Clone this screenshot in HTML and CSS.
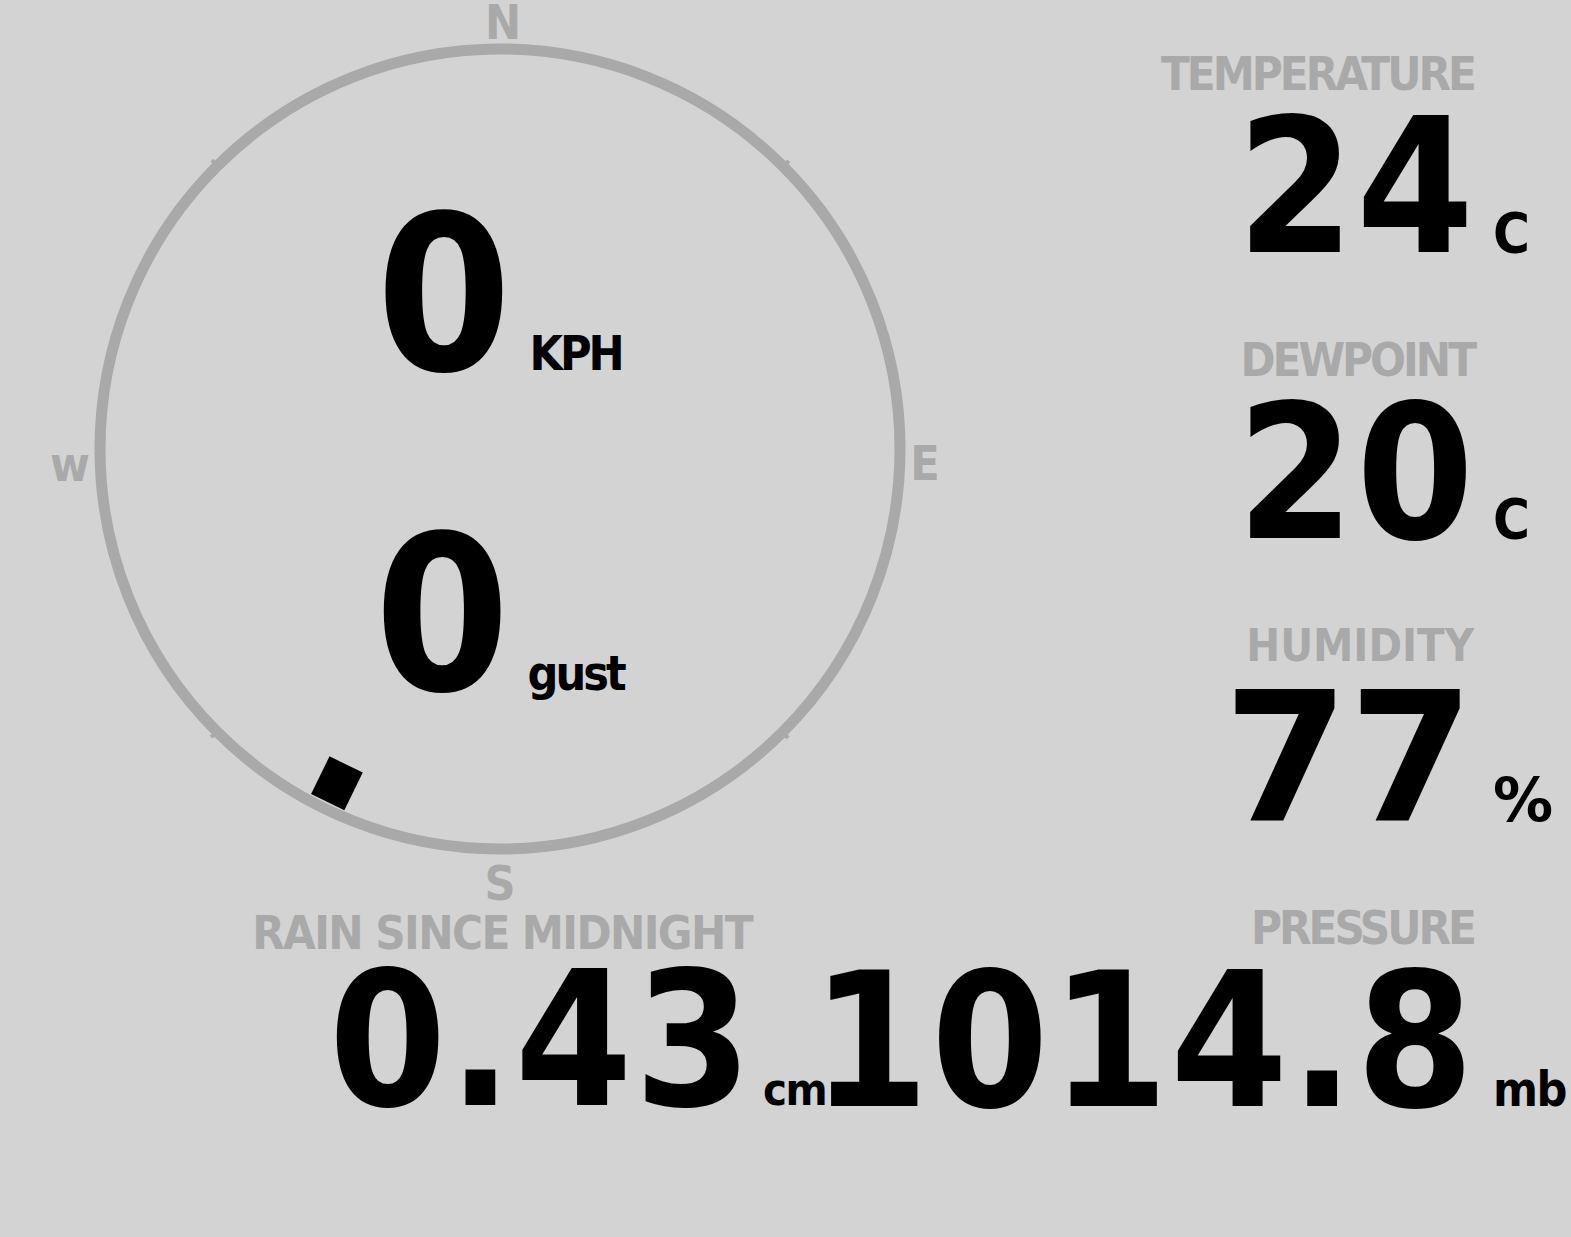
FILE: index.html
```html
<!DOCTYPE html>
<html>
<head>
<meta charset="utf-8">
<title>Weather station</title>
<link rel="stylesheet" href="styles.css">
</head>
<body>
<main class="station">
  <section class="top">
    <div class="compass">
      <svg class="dial" width="1000" height="904" viewBox="0 0 1000 904">
        <circle class="ring" cx="500" cy="449" r="400"/>
        <g transform="translate(500 449)">
          <rect class="tick" x="-1.5" y="-408" width="4" height="6" transform="rotate(45)"/>
          <rect class="tick" x="-1.5" y="-408" width="4" height="6" transform="rotate(135)"/>
          <rect class="tick" x="-1.5" y="-408" width="4" height="6" transform="rotate(225)"/>
          <rect class="tick" x="-1.5" y="-408" width="4" height="6" transform="rotate(315)"/>
          <rect class="vane" x="-18.5" y="-393" width="37" height="42" transform="rotate(206)"/>
        </g>
        <text class="cardinal" x="503" y="39">N</text>
        <text class="cardinal" x="925" y="480">E</text>
        <text class="cardinal" x="500" y="900">S</text>
        <text class="cardinal" x="70" y="481">w</text>
      </svg>
      <div class="wind">
        <div class="wind-row"><span class="wind-value">0</span><span class="wind-unit">KPH</span></div>
        <div class="wind-row"><span class="wind-value">0</span><span class="wind-unit">gust</span></div>
      </div>
    </div>
    <div class="stats">
      <div class="stat">
        <div class="label">TEMPERATURE</div>
        <div class="value">24</div>
        <div class="unit unit-c">C</div>
      </div>
      <div class="stat">
        <div class="label">DEWPOINT</div>
        <div class="value">20</div>
        <div class="unit unit-c">C</div>
      </div>
      <div class="stat stat-humidity">
        <div class="label">HUMIDITY</div>
        <div class="value">77</div>
        <div class="unit unit-pct">%</div>
      </div>
    </div>
  </section>
  <section class="bottom">
    <div class="stat stat-rain">
      <div class="label">RAIN SINCE MIDNIGHT</div>
      <div class="value">0.43</div>
      <div class="unit">cm</div>
    </div>
    <div class="stat stat-pressure">
      <div class="label">PRESSURE</div>
      <div class="value">1014.8</div>
      <div class="unit">mb</div>
    </div>
  </section>
</main>
</body>
</html>
```
FILE: styles.css
```css
html, body {
  margin: 0;
  padding: 0;
}

body {
  background: #d3d3d3;
  width: 1571px;
  height: 1237px;
  overflow: hidden;
  font-family: "DejaVu Sans Condensed", "DejaVu Sans", sans-serif;
  font-weight: bold;
  color: #000;
}

.top {
  display: flex;
  height: 904px;
}

.compass {
  position: relative;
  flex: none;
  width: 1000px;
  height: 904px;
}

.dial {
  position: absolute;
  left: 0;
  top: 0;
  overflow: visible;
}

.ring {
  fill: none;
  stroke: #a9a9a9;
  stroke-width: 11;
}

.tick {
  fill: #a9a9a9;
}

.vane {
  fill: #000;
}

.cardinal {
  font-family: "DejaVu Sans Condensed", "DejaVu Sans", sans-serif;
  font-weight: bold;
  font-size: 48px;
  fill: #a9a9a9;
  text-anchor: middle;
}

.wind {
  position: relative;
  padding-top: 188px;
  display: flex;
  flex-direction: column;
  gap: 104px;
}

.wind-row {
  display: flex;
  justify-content: center;
  align-items: baseline;
  gap: 14px;
  padding-right: 2px;
}

.wind-value {
  font-size: 216px;
  line-height: 216px;
  letter-spacing: 4px;
}

.wind-unit {
  font-size: 48px;
  line-height: 48px;
  letter-spacing: -3px;
}

.stats {
  flex: 1;
  display: flex;
  flex-direction: column;
  align-items: flex-end;
  padding-top: 50px;
}

.stat {
  display: grid;
  grid-template-columns: auto 78px;
  column-gap: 19px;
  align-items: baseline;
  margin-bottom: 60px;
}

.label {
  grid-column: 1;
  grid-row: 1;
  text-align: right;
  font-size: 47px;
  line-height: 48px;
  color: #a9a9a9;
  letter-spacing: -3px;
  white-space: nowrap;
}

.value {
  grid-column: 1;
  grid-row: 2;
  text-align: right;
  font-size: 188px;
  line-height: 178px;
  letter-spacing: 2px;
  margin-right: -2px;
  white-space: nowrap;
}

.unit {
  grid-column: 2;
  grid-row: 2;
  font-size: 48px;
  line-height: 48px;
  letter-spacing: -1.5px;
  white-space: nowrap;
}

.unit-c {
  font-size: 56px;
  letter-spacing: 0;
}

.stat-humidity .label {
  font-size: 45px;
  letter-spacing: 0;
}

.stat-humidity .value {
  font-family: "DejaVu Sans", sans-serif;
  font-size: 180px;
  letter-spacing: 0;
  margin-right: 0;
}

.unit-pct {
  font-family: "DejaVu Sans", sans-serif;
  font-size: 60px;
  letter-spacing: 0;
}

.bottom {
  display: flex;
  align-items: flex-start;
}

.stat-rain {
  margin-left: 252px;
  grid-template-columns: 500px 40px;
  column-gap: 11px;
}

.stat-rain .label {
  margin-top: 5px;
  letter-spacing: -1.6px;
}

.stat-rain .value {
  line-height: 166px;
}

.stat-rain .unit {
  font-size: 45px;
  letter-spacing: -1.5px;
}

.stat-pressure {
  margin-left: auto;
}
```
